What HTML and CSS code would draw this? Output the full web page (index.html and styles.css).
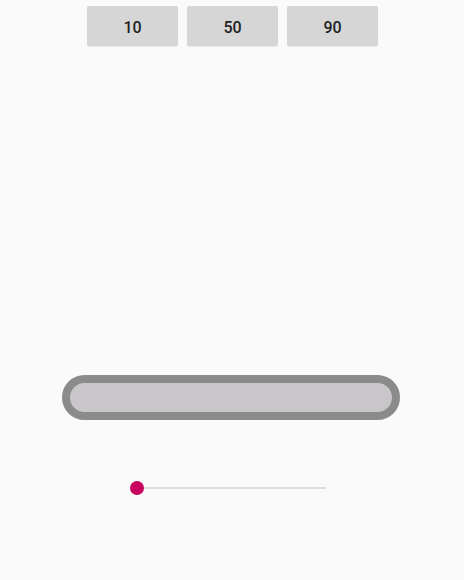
FILE: index.html
```html
<!DOCTYPE html>
<html>
<head>
<meta charset="utf-8">
<link rel="stylesheet" href="styles.css">
</head>
<body>
<div class="page">
  <div class="buttons">
    <button class="btn">10</button>
    <button class="btn">50</button>
    <button class="btn">90</button>
  </div>
  <div class="progress"><div class="fill"></div></div>
  <div class="slider">
    <div class="track"></div>
    <div class="thumb"></div>
  </div>
</div>
</body>
</html>
```
FILE: styles.css
```css
html, body {
  margin: 0;
  padding: 0;
  background: #fafafa;
  width: 464px;
  height: 580px;
  overflow: hidden;
}
.page {
  display: flex;
  flex-direction: column;
  align-items: center;
  font-family: Roboto, "Noto Sans", sans-serif;
}
.buttons {
  display: flex;
  gap: 9px;
  margin-top: 6px;
  margin-left: 1px;
}
.btn {
  width: 91px;
  height: 40px;
  border: none;
  border-radius: 2px;
  background: #d6d6d6;
  color: #1f1f1f;
  font-family: Roboto, "Noto Sans", sans-serif;
  font-size: 16px;
  font-weight: 500;
  padding: 2px 0 0 0;
  box-shadow: 0 1px 1px rgba(0,0,0,0.08);
}
.progress {
  margin-top: 329px;
  width: 338px;
  height: 45px;
  box-sizing: border-box;
  border: 8px solid #8b8b8b;
  border-radius: 23px;
  background: #c8c6c9;
  margin-left: -2px;
}
.slider {
  position: relative;
  margin-top: 61px;
  width: 196px;
  height: 14px;
  margin-left: -8px;
}
.track {
  margin-left: 7px;
  margin-top: 6px;
  height: 2px;
  background: #dcdcdc;
}
.thumb {
  position: absolute;
  left: 0;
  top: 0;
  width: 14px;
  height: 14px;
  border-radius: 50%;
  background: #c8045f;
}
```
